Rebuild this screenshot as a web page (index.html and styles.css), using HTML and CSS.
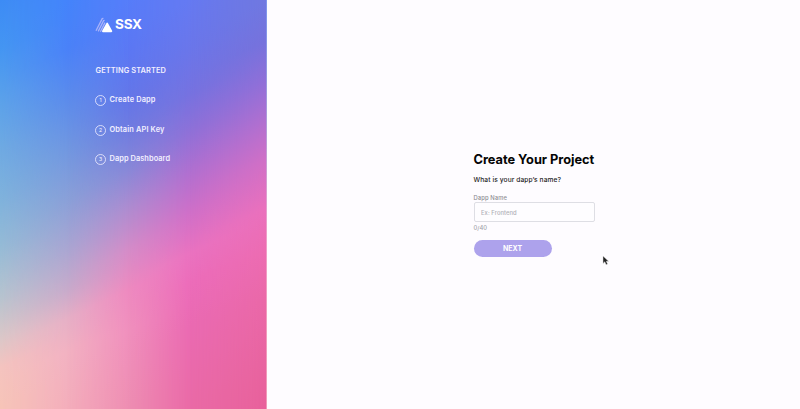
FILE: index.html
```html
<!DOCTYPE html>
<html lang="en">
<head>
<meta charset="utf-8">
<title>SSX</title>
<link rel="stylesheet" href="styles.css">
</head>
<body>
<aside class="side">
  <svg class="backdrop" viewBox="0 0 267 409" preserveAspectRatio="none" aria-hidden="true">
    <defs>
      <linearGradient id="c0" gradientUnits="userSpaceOnUse" x1="0" y1="0" x2="153" y2="340">
        <stop offset="0" stop-color="#3d8cf5"/><stop offset=".12" stop-color="#4496f2"/><stop offset=".245" stop-color="#5ba2ea"/><stop offset=".37" stop-color="#70abe2"/><stop offset=".49" stop-color="#80b3dc"/><stop offset=".61" stop-color="#97bcd6"/><stop offset=".73" stop-color="#b8c4cf"/><stop offset=".83" stop-color="#dcc8c8"/><stop offset=".9" stop-color="#f5c4bf"/><stop offset="1" stop-color="#f7c5b8"/>
      </linearGradient>
      <linearGradient id="c1" gradientUnits="userSpaceOnUse" x1="67" y1="0" x2="220" y2="340">
        <stop offset="0" stop-color="#4484fb"/><stop offset=".12" stop-color="#4a82f8"/><stop offset=".245" stop-color="#5c8ceb"/><stop offset=".37" stop-color="#7298e0"/><stop offset=".49" stop-color="#8aa0d8"/><stop offset=".61" stop-color="#aaa6d2"/><stop offset=".71" stop-color="#c8abcb"/><stop offset=".78" stop-color="#e6b0c6"/><stop offset=".86" stop-color="#f2b2c2"/><stop offset="1" stop-color="#f4aebb"/>
      </linearGradient>
      <linearGradient id="c2" gradientUnits="userSpaceOnUse" x1="128" y1="0" x2="281" y2="340">
        <stop offset="0" stop-color="#567dfa"/><stop offset=".12" stop-color="#5b78f4"/><stop offset=".245" stop-color="#6476e8"/><stop offset=".32" stop-color="#707ce0"/><stop offset=".415" stop-color="#8888d8"/><stop offset=".51" stop-color="#ae8cd0"/><stop offset=".61" stop-color="#d48cc8"/><stop offset=".71" stop-color="#ee8ac0"/><stop offset=".81" stop-color="#f090bd"/><stop offset="1" stop-color="#ee8eb2"/>
      </linearGradient>
      <linearGradient id="c3" gradientUnits="userSpaceOnUse" x1="190" y1="0" x2="343" y2="340">
        <stop offset="0" stop-color="#657af2"/><stop offset=".12" stop-color="#6a76ea"/><stop offset=".23" stop-color="#7672e0"/><stop offset=".32" stop-color="#8e70d8"/><stop offset=".42" stop-color="#b06fd0"/><stop offset=".52" stop-color="#cf6fc8"/><stop offset=".62" stop-color="#ea72c0"/><stop offset=".69" stop-color="#ec6cba"/><stop offset=".8" stop-color="#ea6ab2"/><stop offset="1" stop-color="#ea6aa6"/>
      </linearGradient>
      <linearGradient id="c4" gradientUnits="userSpaceOnUse" x1="267" y1="0" x2="420" y2="340">
        <stop offset="0" stop-color="#7078e0"/><stop offset=".1" stop-color="#7672dc"/><stop offset=".195" stop-color="#906fd8"/><stop offset=".29" stop-color="#b06fd0"/><stop offset=".39" stop-color="#d06fc6"/><stop offset=".51" stop-color="#ea70bc"/><stop offset=".61" stop-color="#ec6cb2"/><stop offset=".73" stop-color="#ea68a8"/><stop offset=".88" stop-color="#e864a0"/><stop offset="1" stop-color="#e8609a"/>
      </linearGradient>
      <linearGradient id="f1" gradientUnits="userSpaceOnUse" x1="0" y1="0" x2="67" y2="0"><stop offset="0" stop-color="#fff" stop-opacity="0"/><stop offset="1" stop-color="#fff"/></linearGradient>
      <linearGradient id="f2" gradientUnits="userSpaceOnUse" x1="67" y1="0" x2="128" y2="0"><stop offset="0" stop-color="#fff" stop-opacity="0"/><stop offset="1" stop-color="#fff"/></linearGradient>
      <linearGradient id="f3" gradientUnits="userSpaceOnUse" x1="128" y1="0" x2="190" y2="0"><stop offset="0" stop-color="#fff" stop-opacity="0"/><stop offset="1" stop-color="#fff"/></linearGradient>
      <linearGradient id="f4" gradientUnits="userSpaceOnUse" x1="190" y1="0" x2="267" y2="0"><stop offset="0" stop-color="#fff" stop-opacity="0"/><stop offset="1" stop-color="#fff"/></linearGradient>
      <mask id="m1"><rect width="267" height="409" fill="url(#f1)"/></mask>
      <mask id="m2"><rect width="267" height="409" fill="url(#f2)"/></mask>
      <mask id="m3"><rect width="267" height="409" fill="url(#f3)"/></mask>
      <mask id="m4"><rect width="267" height="409" fill="url(#f4)"/></mask>
    </defs>
    <rect width="267" height="409" fill="url(#c0)"/>
    <rect width="267" height="409" fill="url(#c1)" mask="url(#m1)"/>
    <rect width="267" height="409" fill="url(#c2)" mask="url(#m2)"/>
    <rect width="267" height="409" fill="url(#c3)" mask="url(#m3)"/>
    <rect width="267" height="409" fill="url(#c4)" mask="url(#m4)"/>
  </svg>
  <div class="brand">
    <svg class="logo" viewBox="0 0 18 16" aria-hidden="true">
      <path d="M1 13.8 7.2 1.6l1.2-.2M3.2 14.4 8.6 3.6l1-.2M5.4 14.7 10 5.6" fill="none" stroke="#e3d3fa" stroke-opacity=".6" stroke-width="1.3"/>
      <path d="M12.2 6.6 16.3 14.2H8z" fill="#fff" stroke="#fff" stroke-width="1.9" stroke-linejoin="round"/>
    </svg>
    <span class="brand-name">SSX</span>
  </div>
  <h2 class="side-title">GETTING STARTED</h2>
  <ol class="steps">
    <li class="step"><span class="num">1</span><span class="s1">Create Dapp</span></li>
    <li class="step"><span class="num">2</span><span class="s2">Obtain API Key</span></li>
    <li class="step"><span class="num">3</span><span class="s3">Dapp Dashboard</span></li>
  </ol>
</aside>
<main class="main">
  <form class="form">
    <h1 class="title">Create Your Project</h1>
    <p class="question">What is your dapp’s name?</p>
    <label class="label" for="name">Dapp Name</label>
    <input class="input" id="name" type="text" placeholder="Ex: Frontend">
    <span class="count">0/40</span>
    <button class="next" type="button">NEXT</button>
  </form>
</main>
<svg class="cursor" viewBox="0 0 8 11" aria-hidden="true"><path d="M1 1v7.4l1.8-1.6 1.3 2.9 1.5-.7-1.3-2.7h2.3z" fill="#222" stroke="#ddd" stroke-width=".5"/></svg>
</body>
</html>
```
FILE: styles.css
```css
* { box-sizing: border-box; }
body {
  margin: 0;
  height: 409px;
  display: flex;
  overflow: hidden;
  background: #fefcff;
  font-family: Inter, "Liberation Sans", sans-serif;
}
.side {
  position: relative;
  width: 266.5px;
  height: 409px;
  padding: 16px 0 0 95px;
  color: #f1efff;
}
.backdrop {
  position: absolute;
  inset: 0;
  z-index: -1;
  width: 266.5px;
  height: 409px;
}
.brand { display: flex; align-items: center; height: 17px; gap: 2px; }
.logo { width: 18px; height: 16px; }
.brand-name { font-size: 13.5px; font-weight: 700; line-height: 17px; color: #fff; letter-spacing: -.2px; }
.side-title {
  margin: 32px 0 0 .5px;
  font-size: 7.4px;
  line-height: 12px;
  font-weight: 600;
  letter-spacing: .12px;
}
.steps { list-style: none; margin: 17px 0 0; padding: 0; display: grid; gap: 17.5px; }
.step { display: flex; align-items: center; height: 12px; gap: 3.5px; font-size: 7.4px; font-weight: 600; line-height: 12px; }
.s1 { letter-spacing: .14px; }
.s2 { letter-spacing: .14px; }
.s3 { letter-spacing: .07px; }
.num {
  width: 11px;
  height: 11px;
  margin-top: 1px;
  border: 1px solid rgba(241, 239, 255, .8);
  border-radius: 50%;
  font-size: 5px;
  font-weight: 500;
  line-height: 9px;
  text-align: center;
}
.main { flex: 1; padding: 151px 0 0 207px; }
.form { width: 121px; display: flex; flex-direction: column; align-items: flex-start; }
.title { margin: 0; font-size: 12.8px; line-height: 17px; font-weight: 700; letter-spacing: -.02px; color: #050505; white-space: nowrap; }
.question { margin: 7px 0 0; font-size: 6.6px; line-height: 10px; font-weight: 500; letter-spacing: .12px; color: #222; white-space: nowrap; }
.label { margin-top: 8px; font-size: 5.8px; line-height: 9px; font-weight: 500; letter-spacing: .12px; color: #8e8e94; }
.input {
  width: 121px;
  height: 20px;
  padding: 0 6.5px;
  border: 1px solid #dedee4;
  border-radius: 2px;
  background: #fefdff;
  font: 500 5.8px/18px Inter, sans-serif;
  letter-spacing: .08px;
}
.input::placeholder { color: #b0b0b6; }
.count { margin-top: 2px; font-size: 5.8px; line-height: 8px; font-weight: 500; color: #a3a3aa; }
.next {
  width: 78px;
  height: 17.5px;
  margin-top: 7.5px;
  padding: 0;
  border: 0;
  border-radius: 9px;
  background: #ada2ec;
  color: #fff;
  font: 700 7px/17.5px Inter, sans-serif;
}
.cursor { position: absolute; left: 602px; top: 255px; width: 8px; height: 11px; }
```
